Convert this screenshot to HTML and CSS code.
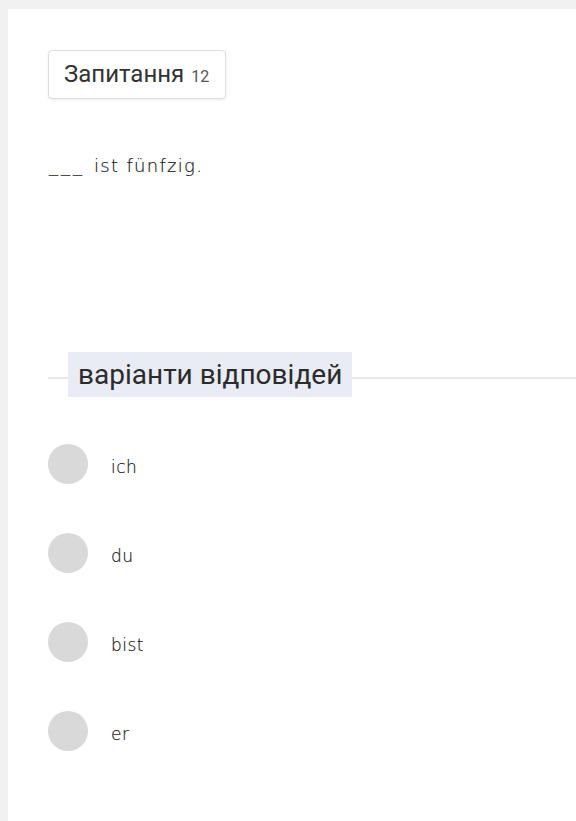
FILE: index.html
```html
<!DOCTYPE html>
<html>
<head>
<meta charset="utf-8">
<link rel="stylesheet" href="styles.css">
</head>
<body>
<div class="card">
  <div class="qhead"><span class="qtitle">Запитання</span><span class="qnum">12</span></div>
  <div class="question"><span class="blank">___</span> ist fünfzig.</div>
  <div class="divider"><span class="label">варіанти відповідей</span></div>
  <ul class="options">
    <li class="option"><span class="dot"></span><span class="otext">ich</span></li>
    <li class="option"><span class="dot"></span><span class="otext">du</span></li>
    <li class="option"><span class="dot"></span><span class="otext">bist</span></li>
    <li class="option"><span class="dot"></span><span class="otext">er</span></li>
  </ul>
</div>
</body>
</html>
```
FILE: styles.css
```css
html, body {
  margin: 0;
  padding: 0;
  background: #f1f1f1;
  height: 100%;
}
body {
  padding: 9px 0 0 8px;
  box-sizing: border-box;
  font-family: Roboto, "Liberation Sans", sans-serif;
}
.card {
  background: #fff;
  min-height: 812px;
  padding: 41px 0 0 40px;
  box-sizing: border-box;
}
.qhead {
  display: inline-flex;
  align-items: baseline;
  gap: 7px;
  height: 49px;
  box-sizing: border-box;
  padding: 0 16px 0 15px;
  line-height: 47px;
  border: 1px solid #dedede;
  border-radius: 4px;
  box-shadow: 0 1px 3px rgba(0,0,0,0.08);
}
.qtitle {
  font-size: 24px;
  color: #333;
}
.qnum {
  font-size: 16px;
  color: #555;
}
.question {
  margin-top: 56px;
  font-family: "DejaVu Sans", sans-serif;
  font-weight: 200;
  font-size: 18px;
  color: #222;
  letter-spacing: 1.3px;
  -webkit-text-stroke: 0.2px #222;
}
.blank {
  letter-spacing: 3px;
  margin-left: 1px;
  margin-right: 2px;
}
.divider {
  margin-top: 176px;
  position: relative;
  height: 45px;
  display: flex;
  align-items: center;
}
.divider::before {
  content: "";
  position: absolute;
  left: 0;
  right: 0;
  top: 25px;
  height: 2px;
  background: #e8e8e8;
}
.label {
  position: relative;
  margin-left: 20px;
  background: #e9ebf5;
  height: 45px;
  line-height: 45px;
  padding: 0 10px;
  font-size: 28px;
  color: #2b2b2b;
}
.options {
  list-style: none;
  margin: 47px 0 0 0;
  padding: 0;
  display: flex;
  flex-direction: column;
  gap: 49px;
}
.option {
  display: flex;
  align-items: center;
  height: 40px;
}
.dot {
  width: 40px;
  height: 40px;
  border-radius: 50%;
  background: #d9d9d9;
  flex: none;
}
.otext {
  margin-left: 23px;
  font-family: "DejaVu Sans", sans-serif;
  font-weight: 200;
  font-size: 17px;
  color: #222;
  -webkit-text-stroke: 0.2px #222;
  letter-spacing: 0.5px;
  padding-top: 6px;
}
```
